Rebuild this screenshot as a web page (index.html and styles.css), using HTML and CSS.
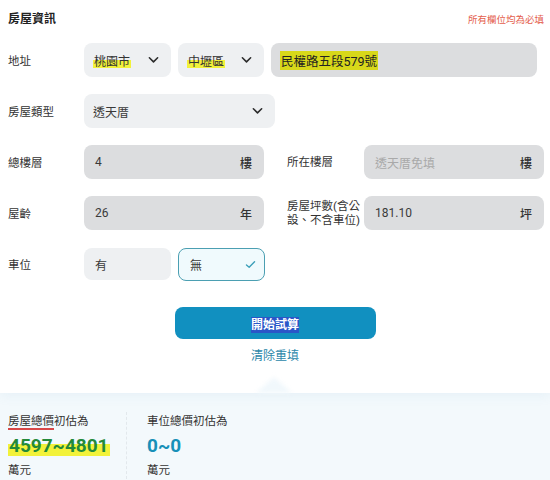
FILE: index.html
```html
<!DOCTYPE html>
<html lang="zh-Hant">
<head>
<meta charset="utf-8">
<link rel="stylesheet" href="styles.css">
</head>
<body>
<div class="card">
  <div class="head">
    <h1 class="title">房屋資訊</h1>
    <span class="required">所有欄位均為必填</span>
  </div>

  <div class="row">
    <div class="label">地址</div>
    <div class="fields">
      <div class="box select w87"><mark class="hl">桃園市</mark><svg class="chev" viewBox="0 0 12 8"><path d="M1.5 1.5 L6 6 L10.5 1.5"/></svg></div>
      <div class="box select w86"><mark class="hl">中壢區</mark><svg class="chev" viewBox="0 0 12 8"><path d="M1.5 1.5 L6 6 L10.5 1.5"/></svg></div>
      <div class="box dark addr"><mark class="hl full">民權路五段579號</mark></div>
    </div>
  </div>

  <div class="row">
    <div class="label">房屋類型</div>
    <div class="fields">
      <div class="box select w191"><span class="val">透天厝</span><svg class="chev" viewBox="0 0 12 8"><path d="M1.5 1.5 L6 6 L10.5 1.5"/></svg></div>
    </div>
  </div>

  <div class="row">
    <div class="label">總樓層</div>
    <div class="fields">
      <div class="box dark w180"><span class="val">4</span><span class="unit">樓</span></div>
      <div class="label2">所在樓層</div>
      <div class="box dark w180"><span class="ph">透天厝免填</span><span class="unit">樓</span></div>
    </div>
  </div>

  <div class="row">
    <div class="label">屋齡</div>
    <div class="fields">
      <div class="box dark w180"><span class="val">26</span><span class="unit">年</span></div>
      <div class="label2">房屋坪數(含公<br>設、不含車位)</div>
      <div class="box dark w180"><span class="val">181.10</span><span class="unit">坪</span></div>
    </div>
  </div>

  <div class="row">
    <div class="label">車位</div>
    <div class="fields">
      <div class="box light w87"><span class="val">有</span></div>
      <div class="box chosen w87"><span class="val">無</span><svg class="check" viewBox="0 0 12 10"><path d="M1.5 5.5 L4.5 8 L10.5 2"/></svg></div>
    </div>
  </div>

  <div class="actions">
    <button class="submit"><span class="sel">開始試算</span></button>
    <a class="reset">清除重填</a>
  </div>
  <div class="pointer"></div>
</div>

<div class="result">
  <div class="col">
    <div class="rlabel"><span class="squiggle">房屋總價</span>初估為</div>
    <div class="num green"><mark class="hl">4597~4801</mark></div>
    <div class="runit">萬元</div>
  </div>
  <div class="col second">
    <div class="rlabel">車位總價初估為</div>
    <div class="num">0~0</div>
    <div class="runit">萬元</div>
  </div>
</div>
</body>
</html>
```

FILE: styles.css
```css
* { box-sizing: border-box; }
html, body { margin: 0; padding: 0; }
body {
  width: 550px;
  height: 480px;
  overflow: hidden;
  background: #f3f9fc;
  font-family: Roboto, "Noto Sans CJK TC", sans-serif;
  color: #333;
  font-size: 11.5px;
}
.card {
  position: relative;
  background: #fff;
  padding: 9px 6px 0 8px;
  height: 393px;
  box-shadow: 0 4px 10px rgba(120, 170, 200, 0.08);
}
.head {
  display: flex;
  justify-content: space-between;
  align-items: center;
  height: 17px;
}
.title {
  margin: 0;
  font-size: 12px;
  font-weight: 700;
  color: #222;
}
.required {
  font-size: 9.5px;
  color: #e4604c;
  padding-top: 2px;
}
.row {
  display: flex;
  align-items: center;
  height: 34px;
  margin-top: 17px;
}
.label {
  width: 76px;
  flex: none;
  font-size: 11.5px;
  color: #333;
}
.fields {
  display: flex;
  align-items: center;
  gap: 7px;
  flex: 1;
}
.box {
  height: 34px;
  border-radius: 8px;
  display: flex;
  align-items: center;
  justify-content: space-between;
  padding: 0 12px 0 11px;
  flex: none;
  font-size: 12px;
}
.select { background: #eef0f2; padding-left: 9px; padding-right: 12px; }
.light { background: #eef0f2; height: 32px; }
.dark { background: #dcdddf; }
.w87 { width: 87px; }
.w86 { width: 86px; }
.w191 { width: 191px; }
.w180 { width: 180px; }
.addr { width: 266px; padding-left: 9px; }
.val { color: #3a3a3a; }
.ph { color: #a9a9a9; }
.unit { color: #333; font-weight: 500; }
.chev {
  width: 11px;
  height: 8px;
  fill: none;
  stroke: #2b2b2b;
  stroke-width: 1.7;
  stroke-linecap: round;
  stroke-linejoin: round;
}
.check {
  width: 11px;
  height: 9px;
  fill: none;
  stroke: #3a9eb8;
  stroke-width: 1.5;
  stroke-linecap: round;
  stroke-linejoin: round;
}
.chosen {
  background: #f0fafd;
  border: 1px solid #4b9fb2;
  height: 33px;
  padding-right: 8px;
}
.label2 {
  width: 70px;
  flex: none;
  margin-left: 16px;
  font-size: 11.5px;
  color: #333;
  line-height: 14px;
  white-space: nowrap;
}
.hl {
  background: linear-gradient(to bottom, transparent 45%, #f2f23a 45%, #f2f23a 95%, transparent 95%);
  color: inherit;
  padding: 0 1px;
}
.hl.full {
  background: #d8d81a;
  color: #222;
  font-size: 12.5px;
}
.actions {
  display: flex;
  flex-direction: column;
  align-items: center;
  margin-top: 26px;
  margin-right: 2px;
}
.submit {
  width: 201px;
  height: 32px;
  border: none;
  border-radius: 8px;
  background: #1190c0;
  color: #fff;
  font-family: inherit;
  font-size: 12px;
  font-weight: 700;
  padding: 0;
}
.sel { background: #2a56c8; padding: 1px 0; }
.reset {
  margin-top: 7px;
  font-size: 12px;
  color: #2c88aa;
}
.pointer {
  position: absolute;
  left: 256px;
  bottom: 0;
  width: 0;
  height: 0;
  border-left: 18px solid transparent;
  border-right: 18px solid transparent;
  border-bottom: 16px solid #f1f8fc;
  filter: blur(2px);
}
.result {
  display: flex;
  padding: 19px 8px 0 8px;
}
.col {
  width: 118px;
  display: flex;
  flex-direction: column;
}
.col.second {
  border-left: 1px dashed #e2e8ec;
  padding-left: 20px;
  width: 200px;
}
.rlabel { font-size: 11.5px; color: #333; height: 18px; line-height: 18px; }
.squiggle {
  text-decoration-line: underline;
  text-decoration-color: #d84848;
  text-decoration-thickness: 1.5px;
  text-underline-offset: 3px;
}
.num {
  font-size: 19px;
  font-weight: 700;
  color: #1790b8;
  height: 28px;
  line-height: 28px;
  margin-top: 2px;
}
.num.green { color: #238a3a; }
.runit { font-size: 11.5px; color: #333; line-height: 18px; margin-top: 1px; }
```
